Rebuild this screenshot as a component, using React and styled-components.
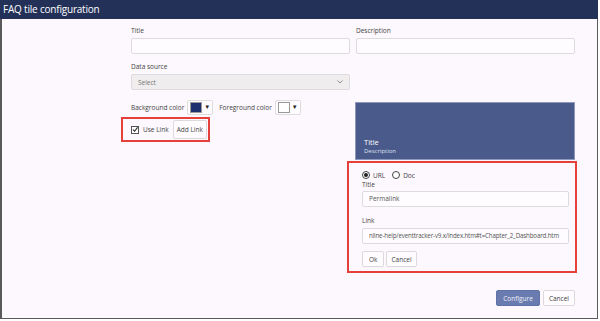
import styled, { createGlobalStyle } from 'styled-components';

const GlobalStyle = createGlobalStyle`
  html, body {
    margin: 0;
    padding: 0;
    background: #ffffff;
  }
  body {
    font-family: "Open Sans", "Noto Sans", sans-serif;
    color: #333;
  }
`;

const Frame = styled.div`
  width: 598px;
  height: 319px;
  box-sizing: border-box;
  border: 1px solid #5a5a5a;
  border-top: none;
  border-left-width: 2px;
  background: #fcf8fd;
  display: flex;
  flex-direction: column;
`;

const Header = styled.div`
  height: 19px;
  margin-left: -2px;
  margin-right: -1px;
  background: #233159;
  color: #fff;
  font-size: 10px;
  line-height: 19px;
  padding-left: 3px;
  letter-spacing: -0.2px;
`;

const Body = styled.div`
  display: grid;
  grid-template-columns: 219px 219px;
  column-gap: 6px;
  padding-left: 129px;
  padding-top: 7px;
`;

const Field = styled.div`
  display: flex;
  flex-direction: column;
  margin-bottom: ${(p) => p.$mb || 0}px;
`;

const Label = styled.label`
  font-size: 6.5px;
  color: #444;
  height: 10px;
  line-height: 10px;
  margin-top: ${(p) => p.$mt || 0}px;
  margin-bottom: ${(p) => p.$mb ?? 0}px;
  white-space: nowrap;
`;

const Input = styled.div`
  height: 16px;
  box-sizing: border-box;
  border: 1px solid #dedbde;
  background: #fefcfe;
  border-radius: 2px;
  font-size: ${(p) => p.$fs || 6.5}px;
  letter-spacing: ${(p) => p.$ls || 0}px;
  line-height: 14px;
  padding-left: 6px;
  color: #555;
  white-space: nowrap;
  overflow: hidden;
`;

const Select = styled(Input)`
  background: #efeded;
  color: #777;
  display: flex;
  align-items: center;
  justify-content: space-between;
  padding-right: 6px;
  line-height: normal;
`;

const LeftStack = styled.div`
  display: flex;
  flex-direction: column;
`;

const ColorRow = styled.div`
  display: flex;
  align-items: center;
  height: 16px;
  font-size: 6.5px;
  color: #444;
  white-space: nowrap;
`;

const ColorButton = styled.div`
  display: flex;
  align-items: center;
  gap: 2px;
  height: 15px;
  box-sizing: border-box;
  border: 1px solid #dddddd;
  background: #fefcfe;
  padding: 0 2px;
  margin: 0 6px 0 3px;
  border-radius: 2px;
`;

const Swatch = styled.div`
  width: 12px;
  height: 11px;
  box-sizing: border-box;
  border: 1px solid #999;
  background: ${(p) => p.$color};
`;

const Caret = styled.span`
  font-size: 6px;
  color: #222;
`;

const Highlight = styled.div`
  border: 2px solid #e5413c;
  box-sizing: border-box;
`;

const LinkToggle = styled(Highlight)`
  width: 89px;
  height: 25px;
  margin: 2px 0 0 -10px;
  display: flex;
  align-items: center;
  padding-left: 8px;
  font-size: 6.5px;
  color: #444;
  white-space: nowrap;
`;

const CheckBox = styled.span`
  width: 8px;
  height: 8px;
  box-sizing: border-box;
  border: 1px solid #555;
  background: #fff;
  display: inline-flex;
  align-items: center;
  justify-content: center;
  margin-right: 4px;
`;

const Button = styled.div`
  height: ${(p) => p.$h || 16}px;
  box-sizing: border-box;
  padding: 0 ${(p) => p.$px || 5}px;
  border: 1px solid ${(p) => (p.$primary ? '#6072a8' : '#dcd8dc')};
  background: ${(p) => (p.$primary ? '#6a7bb0' : '#fefcfe')};
  color: ${(p) => (p.$primary ? '#eef0f8' : '#444')};
  border-radius: 2px;
  font-size: 6.5px;
  display: inline-flex;
  align-items: center;
  white-space: nowrap;
  margin-left: ${(p) => p.$ml || 0}px;
`;

const Tile = styled.div`
  height: 58px;
  margin: 3px 0 0 -1px;
  background: #4a5a8b;
  border: 1px solid #8c98bc;
  box-sizing: border-box;
  display: flex;
  flex-direction: column;
  justify-content: flex-end;
  padding: 0 0 4px 8px;
  color: #fff;
`;

const TileTitle = styled.div`
  font-size: 7.5px;
  line-height: 10px;
`;

const TileDesc = styled.div`
  font-size: 6px;
  line-height: 8px;
  color: #dde2ef;
`;

const LinkPanel = styled(Highlight)`
  grid-column: 2;
  width: 230px;
  height: 112px;
  margin: 1px 0 0 -9px;
  padding: 7px 6px 0 13px;
  display: flex;
  flex-direction: column;
`;

const RadioRow = styled.div`
  display: flex;
  align-items: center;
  font-size: 6.5px;
  color: #444;
  height: 10px;
`;

const Radio = styled.span`
  width: 8px;
  height: 8px;
  box-sizing: border-box;
  border: 1px solid #444;
  border-radius: 50%;
  background: #fff;
  display: inline-flex;
  align-items: center;
  justify-content: center;
  margin-right: 3px;
  margin-left: ${(p) => p.$ml || 0}px;

  &::after {
    content: '';
    width: 4px;
    height: 4px;
    border-radius: 50%;
    background: ${(p) => (p.$on ? '#222' : 'transparent')};
  }
`;

const ButtonRow = styled.div`
  display: flex;
  margin-top: ${(p) => p.$mt || 0}px;
`;

const Footer = styled.div`
  grid-column: 2;
  display: flex;
  justify-content: flex-end;
  margin-top: 17px;
`;

export default function App() {
  return (
    <>
      <GlobalStyle />
      <Frame>
        <Header>FAQ tile configuration</Header>
        <Body>
          <Field $mb={8}>
            <Label $mb={2}>Title</Label>
            <Input />
          </Field>
          <Field $mb={8}>
            <Label $mb={2}>Description</Label>
            <Input />
          </Field>

          <Field $mb={9}>
            <Label $mb={2}>Data source</Label>
            <Select>
              <span>Select</span>
              <svg width="6" height="4" viewBox="0 0 6 4">
                <path d="M0.5 0.5 L3 3 L5.5 0.5" fill="none" stroke="#777" strokeWidth="0.8" />
              </svg>
            </Select>
          </Field>
          <div />

          <LeftStack>
            <ColorRow>
              Background color
              <ColorButton>
                <Swatch $color="#1c2f6e" />
                <Caret>▼</Caret>
              </ColorButton>
              Foreground color
              <ColorButton>
                <Swatch $color="#ffffff" />
                <Caret>▼</Caret>
              </ColorButton>
            </ColorRow>
            <LinkToggle>
              <CheckBox>
                <svg width="7" height="7" viewBox="0 0 7 7">
                  <path d="M1 3.5 L3 5.5 L6.5 1" fill="none" stroke="#222" strokeWidth="1.2" />
                </svg>
              </CheckBox>
              Use Link
              <Button $h={19} $px={3} $ml={4}>Add Link</Button>
            </LinkToggle>
          </LeftStack>
          <Tile>
            <TileTitle>Title</TileTitle>
            <TileDesc>Description</TileDesc>
          </Tile>

          <LinkPanel>
            <RadioRow>
              <Radio $on />
              URL
              <Radio $ml={7} />
              Doc
            </RadioRow>
            <Label $mb={1}>Title</Label>
            <Input>Permalink</Input>
            <Label $mt={9} $mb={2}>Link</Label>
            <Input $fs={6.2} $ls={-0.15}>nline-help/eventtracker-v9.x/index.htm#t=Chapter_2_Dashboard.htm</Input>
            <ButtonRow $mt={7}>
              <Button $px={6}>Ok</Button>
              <Button $px={4} $ml={2}>Cancel</Button>
            </ButtonRow>
          </LinkPanel>

          <Footer>
            <Button $primary $px={6}>Configure</Button>
            <Button $px={5} $ml={3}>Cancel</Button>
          </Footer>
        </Body>
      </Frame>
    </>
  );
}
